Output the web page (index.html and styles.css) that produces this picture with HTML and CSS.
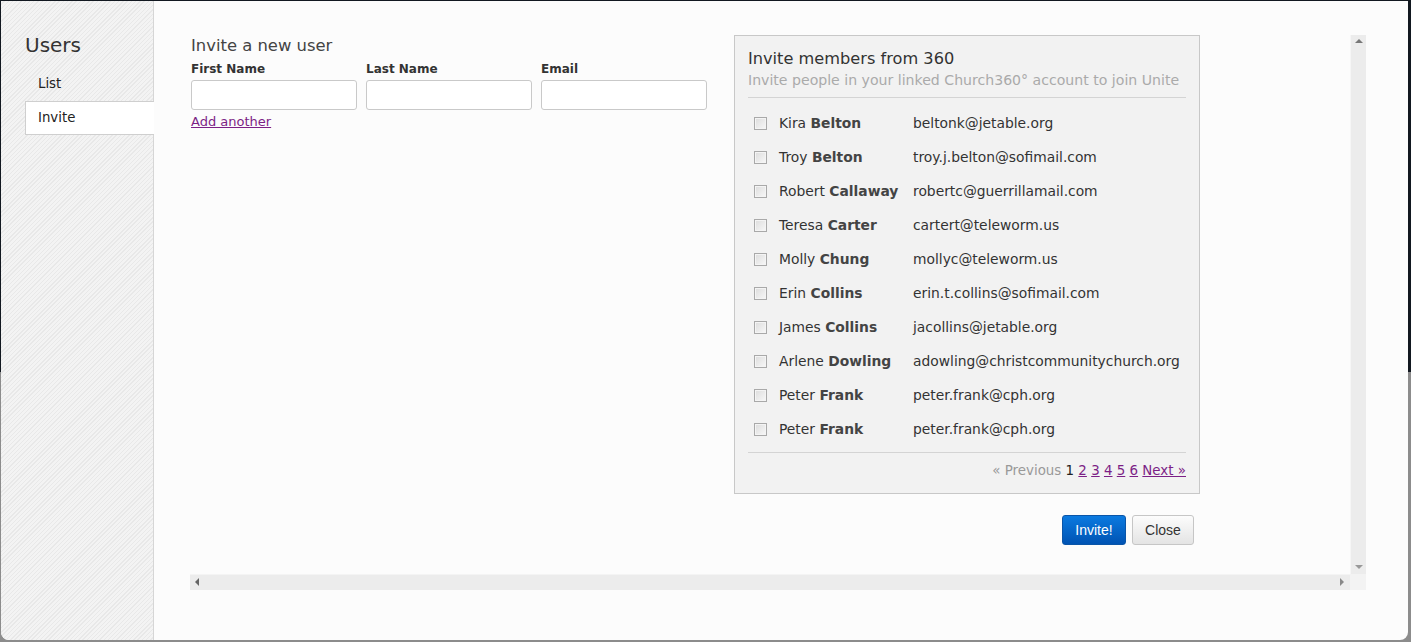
FILE: index.html
```html
<!DOCTYPE html>
<html>
<head>
<meta charset="utf-8">
<title>Users - Invite</title>
<link rel="stylesheet" href="styles.css">
</head>
<body>
<div class="modal">
  <div class="notch"></div>
  <aside class="sidebar">
    <h2 class="side-title">Users</h2>
    <ul class="side-nav">
      <li class="nav-item">List</li>
      <li class="nav-item active">Invite</li>
    </ul>
  </aside>
  <main class="main">
    <div class="scroller">
      <div class="scroll-content">
        <div class="columns">
          <section class="invite-form">
            <h3 class="form-title">Invite a new user</h3>
            <div class="fields">
              <label class="field"><span class="field-label">First Name</span><input class="text-input" type="text"></label>
              <label class="field"><span class="field-label">Last Name</span><input class="text-input" type="text"></label>
              <label class="field"><span class="field-label">Email</span><input class="text-input" type="text"></label>
            </div>
            <a class="link add-another" href="#">Add another</a>
          </section>
          <div class="right-col">
            <section class="panel">
              <h3 class="panel-title">Invite members from 360</h3>
              <p class="panel-sub">Invite people in your linked Church360° account to join Unite</p>
              <ul class="members">
                <li class="member"><span class="cb"></span><span class="name">Kira <b>Belton</b></span><span class="email">beltonk@jetable.org</span></li>
                <li class="member"><span class="cb"></span><span class="name">Troy <b>Belton</b></span><span class="email">troy.j.belton@sofimail.com</span></li>
                <li class="member"><span class="cb"></span><span class="name">Robert <b>Callaway</b></span><span class="email">robertc@guerrillamail.com</span></li>
                <li class="member"><span class="cb"></span><span class="name">Teresa <b>Carter</b></span><span class="email">cartert@teleworm.us</span></li>
                <li class="member"><span class="cb"></span><span class="name">Molly <b>Chung</b></span><span class="email">mollyc@teleworm.us</span></li>
                <li class="member"><span class="cb"></span><span class="name">Erin <b>Collins</b></span><span class="email">erin.t.collins@sofimail.com</span></li>
                <li class="member"><span class="cb"></span><span class="name">James <b>Collins</b></span><span class="email">jacollins@jetable.org</span></li>
                <li class="member"><span class="cb"></span><span class="name">Arlene <b>Dowling</b></span><span class="email">adowling@christcommunitychurch.org</span></li>
                <li class="member"><span class="cb"></span><span class="name">Peter <b>Frank</b></span><span class="email">peter.frank@cph.org</span></li>
                <li class="member"><span class="cb"></span><span class="name">Peter <b>Frank</b></span><span class="email">peter.frank@cph.org</span></li>
              </ul>
              <div class="pager">
                <span class="pg-disabled">« Previous</span>
                <span class="pg-current">1</span>
                <a class="link" href="#">2</a>
                <a class="link" href="#">3</a>
                <a class="link" href="#">4</a>
                <a class="link" href="#">5</a>
                <a class="link" href="#">6</a>
                <a class="link" href="#">Next »</a>
              </div>
            </section>
            <div class="actions">
              <button class="btn btn-primary">Invite!</button>
              <button class="btn btn-default">Close</button>
            </div>
          </div>
        </div>
      </div>
      <div class="vbar"><span class="arrow up"></span><span class="arrow down"></span></div>
      <div class="hbar"><span class="arrow left"></span><span class="arrow right"></span></div>
      <div class="corner"></div>
    </div>
  </main>
</div>
</body>
</html>
```

FILE: styles.css
```css
* { box-sizing: border-box; }
html, body { margin: 0; padding: 0; }
body {
  width: 1411px;
  height: 642px;
  overflow: hidden;
  background: linear-gradient(to bottom, #121820 0, #121820 372px, #8c8c8c 372px, #8c8c8c 100%);
  font-family: "DejaVu Sans", Verdana, sans-serif;
  color: #333;
}
.modal {
  position: relative;
  margin: 1px 3px 0 1px;
  height: 639px;
  display: flex;
  background: #fcfcfc;
  border-radius: 0 0 8px 8px;
  overflow: hidden;
}
.notch {
  position: absolute;
  top: -1px;
  left: 639px;
  width: 63px;
  height: 2px;
  background: #fcfcfc;
}
.sidebar {
  width: 153px;
  flex: none;
  padding: 32px 0 0 24px;
  border-right: 1px solid #d6d6d6;
  background: repeating-linear-gradient(135deg, #f3f3f3 0, #f3f3f3 2px, #e8e8e8 2px, #e8e8e8 3px);
  position: relative;
  z-index: 1;
}
.side-title {
  margin: 0 0 10px;
  font-size: 20px;
  line-height: 24px;
  font-weight: normal;
  color: #333;
}
.side-nav {
  list-style: none;
  margin: 0 -1px 0 0;
  padding: 0;
}
.nav-item {
  height: 34px;
  line-height: 34px;
  padding-left: 13px;
  font-size: 13.3px;
  color: #222;
}
.nav-item.active {
  background: #fff;
  border: 1px solid #cfcfcf;
  border-right: none;
  line-height: 32px;
  padding-left: 12px;
}
.main {
  flex: 1;
  padding: 34px 42px 0 36px;
}
.scroller {
  display: grid;
  grid-template-columns: 1160px 16px;
  grid-template-rows: 539px 16px;
  width: 1176px;
  height: 555px;
}
.scroll-content {
  padding: 0 0 0 1px;
  overflow: hidden;
}
.columns {
  display: flex;
  gap: 26px;
  align-items: flex-start;
}
.invite-form { width: 517px; }
.form-title {
  margin: 0 0 5px;
  padding-top: 1px;
  font-size: 16.4px;
  line-height: 20px;
  font-weight: normal;
  color: #444;
}
.fields {
  display: flex;
  gap: 9px;
}
.field {
  display: flex;
  flex-direction: column;
  width: 166px;
}
.field-label {
  font-size: 12px;
  line-height: 16px;
  font-weight: bold;
  color: #333;
  margin-bottom: 3px;
}
.text-input {
  height: 30px;
  width: 166px;
  border: 1px solid #c9c9c9;
  border-radius: 3px;
  background: #fff;
  margin: 0;
}
.link {
  color: #7c1f86;
  text-decoration: underline;
}
.add-another {
  display: inline-block;
  margin-top: 4px;
  font-size: 13px;
  line-height: 16px;
}
.right-col { width: 466px; }
.panel {
  background: #f2f2f2;
  border: 1px solid #c8c8c8;
  padding: 13px 13px 13px;
}
.panel-title {
  margin: 0;
  font-size: 16.2px;
  line-height: 20px;
  font-weight: normal;
  color: #333;
}
.panel-sub {
  margin: 2px 0 0;
  padding-bottom: 8px;
  border-bottom: 1px solid #d4d4d4;
  font-size: 14.1px;
  line-height: 18px;
  color: #aaa;
  white-space: nowrap;
}
.members {
  list-style: none;
  margin: 0;
  padding: 8px 0 6px;
  border-bottom: 1px solid #d4d4d4;
}
.member {
  display: flex;
  align-items: center;
  height: 34px;
  font-size: 13.85px;
  color: #333;
  white-space: nowrap;
}
.cb {
  width: 13px;
  height: 13px;
  margin-left: 6px;
  margin-right: 12px;
  border: 1px solid #a9a9a9;
  background: linear-gradient(135deg, #dcdcdc, #f8f8f8);
  box-shadow: inset 0 0 0 1px #f4f4f4;
  flex: none;
}
.name { width: 134px; flex: none; }
.name b { font-weight: bold; color: #444; }
.email { color: #333; }
.pager {
  padding-top: 9px;
  text-align: right;
  font-size: 13.4px;
  line-height: 18px;
}
.pg-disabled { color: #999; }
.pg-current { color: #222; }
.actions {
  display: flex;
  justify-content: flex-end;
  gap: 6px;
  padding: 21px 6px 0 0;
}
.btn {
  height: 30px;
  border-radius: 3px;
  font-family: "Liberation Sans", Arial, sans-serif;
  font-size: 14px;
  padding: 0 8px;
}
.btn-primary {
  width: 64px;
  color: #fff;
  background: linear-gradient(to bottom, #0b7ae0, #0053b3);
  border: 1px solid #0a55a8;
}
.btn-default {
  width: 62px;
  color: #333;
  background: linear-gradient(to bottom, #fcfcfc, #e4e4e4);
  border: 1px solid #c6c6c6;
}
.vbar {
  position: relative;
  background: #ececec;
  border-left: 1px solid #f6f6f6;
}
.hbar {
  position: relative;
  background: #ececec;
  border-top: 1px solid #f4f4f4;
}
.corner { background: #f3f3f3; }
.arrow {
  position: absolute;
  width: 0;
  height: 0;
  border: 4px solid transparent;
}
.arrow.up { top: 4px; left: 4px; border-bottom-color: #777; border-top-width: 0; }
.arrow.down { bottom: 5px; left: 4px; border-top-color: #999; border-bottom-width: 0; }
.arrow.left { left: 5px; top: 3px; border-right-color: #666; border-left-width: 0; }
.arrow.right { right: 6px; top: 3px; border-left-color: #888; border-right-width: 0; }
```
